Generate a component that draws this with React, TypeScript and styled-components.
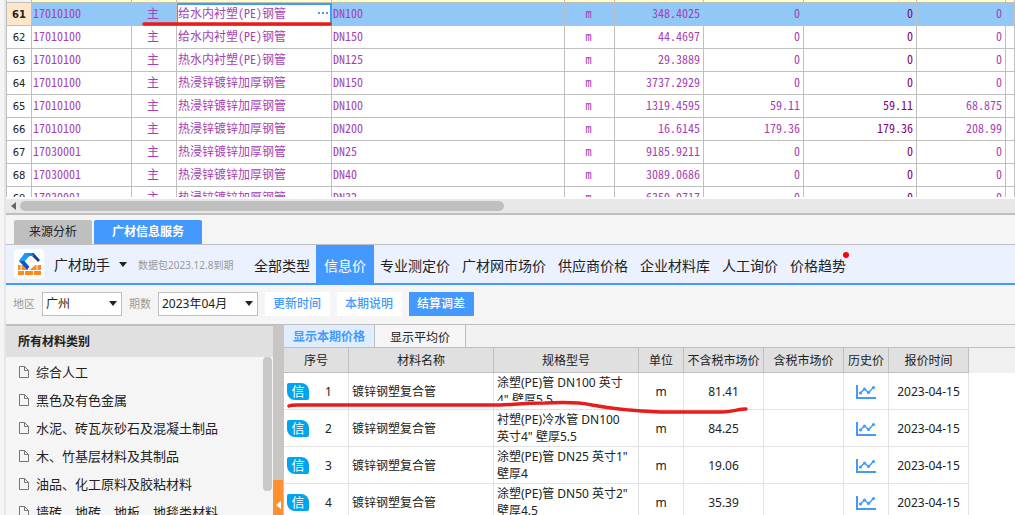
import React from "react";
import styled, { createGlobalStyle, css } from "styled-components";

const GlobalStyle = createGlobalStyle`
  *, *::before, *::after { box-sizing: border-box; }
  body {
    margin: 0;
    background: #f5f5f5;
    color: #222;
    font-family: "Noto Sans", "Noto Sans CJK SC", sans-serif;
    font-size: 12px;
    line-height: 16px;
  }
  button, select { font: inherit; color: inherit; }
  button { border: 0; padding: 0; background: none; cursor: pointer; }
`;

const Shell = styled.div`
  position: relative;
  display: flex;
  flex-direction: column;
  height: 100vh;
  overflow: hidden;
  padding-left: 6px;
  background: linear-gradient(to right, #f5f5f5 4px, #e6e6e6 4px, #e6e6e6 6px, #f5f5f5 6px);
`;

/* ---- bill of materials grid ---- */

const GridPane = styled.div`
  flex: none;
  height: 199px;
  padding-bottom: 2px;
  background: #fff;
`;

const GridClip = styled.div`
  height: 100%;
  overflow: hidden;
`;

const Grid = styled.table`
  width: 100%;
  table-layout: fixed;
  border-collapse: separate;
  border-spacing: 0;
  border-left: 1px solid #bfbfbf;
  font-family: "Noto Sans Mono CJK SC", "Noto Sans CJK SC", monospace;
`;

const Col = styled.col<{ $w?: number }>`
  ${(p) => p.$w && css`width: ${p.$w}px;`}
`;

const HeadEdge = styled.td<{ $plain?: boolean }>`
  height: 3px;
  padding: 0;
  border-right: 1px solid #bfbfbf;
  border-bottom: 1px solid #bfbfbf;
  background: ${(p) => (p.$plain ? "#f2f2f2" : "#ffffc8")};
`;

const Cell = styled.td<{ $align?: string; $dark?: boolean }>`
  height: 23px;
  padding: 0 3px 2px 1px;
  border-right: 1px solid #bfbfbf;
  border-bottom: 1px solid #bfbfbf;
  color: ${(p) => (p.$dark ? "#800080" : "#a63fb5")};
  line-height: 20px;
  text-align: ${(p) => p.$align || "left"};
  white-space: nowrap;
`;

const RowNumber = styled.th<{ $on: boolean }>`
  height: 23px;
  padding: 2px 0 0;
  border-right: 1px solid #bfbfbf;
  border-bottom: 1px solid #bfbfbf;
  background: ${(p) => (p.$on ? "#ffe6c8" : "#fff")};
  color: #222;
  font-family: "DejaVu Sans", sans-serif;
  font-size: 10px;
  font-weight: ${(p) => (p.$on ? 700 : 400)};
  line-height: 20px;
`;

const GridRow = styled.tr<{ $on: boolean }>`
  background: ${(p) => (p.$on ? "#91c8f8" : "#fff")};
`;

const EditCell = styled(Cell)`
  background: #fff;
  box-shadow: inset 0 2px #4499ff, inset 1px 0 #4499ff, inset -1px 0 #4499ff;
  border-right-color: #4499ff;
`;

const EditContent = styled.div`
  display: flex;
  align-items: center;
  justify-content: space-between;
`;

const More = styled.button`
  display: flex;
  gap: 2px;
`;

const MoreDot = styled.span`
  width: 2px;
  height: 2px;
  background: #5b9bd5;
`;

const HScroll = styled.div`
  flex: none;
  display: flex;
  align-items: center;
  gap: 4px;
  height: 16px;
  padding: 0 5px;
  border-bottom: 2px solid #bfbfbf;
  background: #e8e8e8;
`;

const HThumb = styled.div`
  width: 484px;
  height: 10px;
  border-radius: 5px;
  background: #bfbfbf;
`;

/* ---- panel tabs ---- */

const PanelTabs = styled.div`
  flex: none;
  display: flex;
  align-items: flex-end;
  gap: 2px;
  height: 30px;
  padding-left: 8px;
  border-bottom: 1px solid #bfbfbf;
`;

const PanelTab = styled.button<{ $on?: boolean }>`
  height: 24px;
  padding: 0 ${(p) => (p.$on ? 18 : 15)}px;
  border-radius: 2px 2px 0 0;
  background: ${(p) => (p.$on ? "#4499ff" : "#bfbfbf")};
  color: ${(p) => (p.$on ? "#fff" : "#222")};
  font-weight: ${(p) => (p.$on ? 700 : 400)};
`;

const NavBar = styled.nav`
  flex: none;
  display: flex;
  align-items: center;
  height: 40px;
  padding-left: 8px;
  border-bottom: 2px solid #4499ff;
  background: #ebf1ff;
  font-size: 14px;
`;

const Brand = styled.button`
  display: flex;
  align-items: center;
  gap: 9px;
`;

const BrandName = styled.span`
  padding: 2px 0 0 1px;
`;

const Expiry = styled.span`
  width: 121px;
  padding: 2px 0 0 11px;
  color: #999;
  font-size: 10px;
  white-space: nowrap;
`;

const NavItem = styled.button<{ $on?: boolean }>`
  position: relative;
  height: 38px;
  padding: 4px ${(p) => (p.$on ? 8 : 6)}px 0;
  background: ${(p) => (p.$on ? "#4499ff" : "transparent")};
  color: ${(p) => (p.$on ? "#fff" : "#222")};
  white-space: nowrap;
`;

const Dot = styled.span`
  position: absolute;
  top: 7px;
  right: 3px;
  width: 6px;
  height: 6px;
  border-radius: 50%;
  background: #f00;
`;

/* ---- filters ---- */

const Filters = styled.div`
  flex: none;
  display: flex;
  align-items: center;
  gap: 7px;
  height: 40px;
  padding: 0 7px 2px;
  border-bottom: 1px solid #bfbfbf;
`;

const FilterLabel = styled.label`
  color: #999;
  font-size: 11px;
`;

const SelectBox = styled.span<{ $w: number }>`
  position: relative;
  width: ${(p) => p.$w}px;
  height: 24px;
`;

const Select = styled.select`
  appearance: none;
  width: 100%;
  height: 100%;
  padding: 1px 4px 0 3px;
  border: 1px solid #bfbfbf;
  border-radius: 0;
  background: #fff;
`;

const SelectCaret = styled.span`
  position: absolute;
  top: 9px;
  right: 5px;
  display: flex;
  pointer-events: none;
`;

const FilterButton = styled.button<{ $primary?: boolean }>`
  width: 65px;
  height: 24px;
  padding: 1px 1px 0 0;
  background: ${(p) => (p.$primary ? "#4499ff" : "#fff")};
  color: ${(p) => (p.$primary ? "#fff" : "#4499ff")};
  font-weight: 500;
`;

/* ---- lower panes ---- */

const Panes = styled.div`
  flex: 1;
  display: flex;
  min-height: 0;
  overflow: hidden;
`;

const Side = styled.aside`
  flex: none;
  display: flex;
  flex-direction: column;
  width: 267px;
`;

const SideTitle = styled.h2`
  flex: none;
  margin: 0;
  padding-left: 12px;
  border-top: 1px solid #bfbfbf;
  background: #e0e0e0;
  font-size: 12px;
  font-weight: 700;
  line-height: 31px;
`;

const SideBody = styled.div`
  flex: 1;
  display: flex;
  min-height: 0;
  overflow: hidden;
`;

const Tree = styled.ul`
  flex: 1;
  margin: 0;
  padding: 1px 0 0 13px;
  list-style: none;
`;

const TreeItem = styled.button`
  display: flex;
  align-items: center;
  gap: 7px;
  width: 100%;
  height: 28px;
  font-size: 13px;
  white-space: nowrap;
`;

const VTrack = styled.div`
  width: 10px;
  padding-right: 1px;
`;

const VThumb = styled.div`
  height: 134px;
  border-radius: 4px;
  background: #c8c8c8;
`;

const Splitter = styled.div`
  flex: none;
  width: 11px;
  padding-top: 155px;
  background: #c8c5c3;
`;

const SplitHandle = styled.button`
  display: flex;
  align-items: center;
  justify-content: center;
  width: 10px;
  height: 50px;
  background: #ff9030;
`;

const Main = styled.section`
  flex: 1;
  min-width: 0;
  overflow: hidden;
  background: #fff;
`;

const ViewTabs = styled.div`
  display: flex;
  height: 23px;
  border-bottom: 1px solid #bfbfbf;
  background: #f2f2f2;
`;

const ViewTab = styled.button<{ $on?: boolean }>`
  width: 91px;
  padding-top: ${(p) => (p.$on ? 1 : 3)}px;
  border-right: 1px solid #bfbfbf;
  background: ${(p) => (p.$on ? "#e0edff" : "#f5f5f5")};
  color: ${(p) => (p.$on ? "#4499ff" : "#222")};
  font-weight: ${(p) => (p.$on ? 700 : 400)};
`;

const Prices = styled.table`
  width: 100%;
  table-layout: fixed;
  border-collapse: separate;
  border-spacing: 0;
`;

const PriceHead = styled.th`
  height: 25px;
  padding: 2px 0 0;
  border-right: 1px solid #bfbfbf;
  border-bottom: 1px solid #bfbfbf;
  background: #e0e0e0;
  font-weight: 400;
  white-space: nowrap;
`;

const HeadFill = styled.td`
  background: #f0f0f0;
`;

const PriceCell = styled.td<{ $align?: string }>`
  height: 37px;
  padding: 0 3px;
  border-right: 1px solid #e2e2e2;
  border-bottom: 1px solid #e2e2e2;
  text-align: ${(p) => p.$align || "center"};
  line-height: 17px;
  white-space: nowrap;
`;

const IndexBox = styled.div`
  display: flex;
  align-items: center;
  gap: 16px;
`;

const Badge = styled.span`
  width: 22px;
  height: 17px;
  border-radius: 2px 8px 2px 8px;
  background: #00a4ee;
  color: #fff;
  font-size: 13px;
`;

const Spec = styled.div<{ $cut: boolean }>`
  height: ${(p) => (p.$cut ? 27 : 34)}px;
  margin-bottom: ${(p) => (p.$cut ? 7 : 0)}px;
  overflow: hidden;
`;

const IconButton = styled.button`
  display: inline-flex;
  vertical-align: middle;
`;

const Marks = styled.svg`
  position: absolute;
  top: 0;
  left: 0;
  pointer-events: none;
`;

const Caret = () => (
  <svg width="8" height="5" viewBox="0 0 8 5" aria-hidden="true">
    <path d="M0 0h8L4 5z" fill="#222" />
  </svg>
);

const Logo = () => (
  <svg width="30" height="30" viewBox="0 0 30 30" aria-hidden="true">
    <rect width="30" height="30" rx="4" fill="#fff" />
    <path d="M4 16h6l5 4.500 4-4.500h8v10H4z" fill="#ff8a1c" />
    <path d="M4 21.500h23M10.500 21.500v5M19.500 21.500v5M7 16v5.500M14.500 20v1.500M23 16v5.500" stroke="#fff" strokeWidth="1" />
    <path d="M11 4h7l-7.500 8 5 6-2.500 2.500L5 12z" fill="#0757c8" />
    <path d="M11 4h7l-7.500 8H5z" fill="#18a0f8" />
    <path d="M17 4h2.500L26 11l-2 2-6-6z" fill="#16418f" />
    <path d="M12 4h6l2 3h-5z" fill="#1787e8" />
    <path d="M15 20.500l6-5" stroke="#fff" strokeWidth="1.500" />
  </svg>
);

const FileIcon = () => (
  <svg width="10" height="12" viewBox="0 0 10 12" fill="none" stroke="#777" aria-hidden="true">
    <path d="M.5.5h5l4 4v7h-9z" />
    <path d="M5.500.5v4h4" />
  </svg>
);

const ChartIcon = () => (
  <svg width="20" height="15" viewBox="0 0 20 15" fill="none" stroke="#4499ff" aria-hidden="true">
    <path d="M1 0v13h19" strokeWidth="2" />
    <path d="M4.500 8L8.500 4 12.500 7.500 17.500 2.500" strokeWidth="1.500" />
    <g fill="#4499ff" stroke="none">
      <circle cx="4.500" cy="8" r="1.600" />
      <circle cx="8.500" cy="4" r="1.600" />
      <circle cx="12.500" cy="7.500" r="1.600" />
      <circle cx="17.500" cy="2.500" r="1.600" />
    </g>
  </svg>
);

const gridCols = [25, 100, 45, 155, 233, 50, 89, 100, 113, 89];

const gridRows = [
  ["61", "17010100", "给水内衬塑(PE)钢管", "DN100", "348.4025", "0", "0", "0"],
  ["62", "17010100", "给水内衬塑(PE)钢管", "DN150", "44.4697", "0", "0", "0"],
  ["63", "17010100", "热水内衬塑(PE)钢管", "DN125", "29.3889", "0", "0", "0"],
  ["64", "17010100", "热浸锌镀锌加厚钢管", "DN150", "3737.2929", "0", "0", "0"],
  ["65", "17010100", "热浸锌镀锌加厚钢管", "DN100", "1319.4595", "59.11", "59.11", "68.875"],
  ["66", "17010100", "热浸锌镀锌加厚钢管", "DN200", "16.6145", "179.36", "179.36", "208.99"],
  ["67", "17030001", "热浸锌镀锌加厚钢管", "DN25", "9185.9211", "0", "0", "0"],
  ["68", "17030001", "热浸锌镀锌加厚钢管", "DN40", "3089.0686", "0", "0", "0"],
  ["69", "17030001", "热浸锌镀锌加厚钢管", "DN32", "6359.9717", "0", "0", "0"],
];

const navItems = ["全部类型", "信息价", "专业测定价", "广材网市场价", "供应商价格", "企业材料库", "人工询价", "价格趋势"];

const categories = [
  "综合人工",
  "黑色及有色金属",
  "水泥、砖瓦灰砂石及混凝土制品",
  "木、竹基层材料及其制品",
  "油品、化工原料及胶粘材料",
  "墙砖、地砖、地板、地毯类材料",
];

const priceCols = [65, 145, 145, 45, 80, 80, 45, 80];
const priceHeads = ["序号", "材料名称", "规格型号", "单位", "不含税市场价", "含税市场价", "历史价", "报价时间"];

const prices = [
  { spec: ["涂塑(PE)管 DN100 英寸", "4\" 壁厚5.5"], price: "81.41" },
  { spec: ["衬塑(PE)冷水管 DN100", "英寸4\" 壁厚5.5"], price: "84.25" },
  { spec: ["涂塑(PE)管 DN25 英寸1\"", "壁厚4"], price: "19.06" },
  { spec: ["涂塑(PE)管 DN50 英寸2\"", "壁厚4.5"], price: "35.39" },
];

export default function App() {
  return (
    <Shell>
      <GlobalStyle />
      <GridPane>
        <GridClip>
          <Grid>
            <colgroup>
              {gridCols.map((w, i) => <Col key={i} $w={w} />)}
              <Col />
            </colgroup>
            <tbody>
              <tr aria-hidden="true">
                {[...gridCols, 0].map((_, i) => <HeadEdge key={i} $plain={i === 0} />)}
              </tr>
              {gridRows.map(([no, code, name, spec, qty, a, b, c], i) => (
                <GridRow key={no} $on={i === 0}>
                  <RowNumber scope="row" $on={i === 0}>{no}</RowNumber>
                  <Cell>{code}</Cell>
                  <Cell $align="center">主</Cell>
                  {i === 0 ? (
                    <EditCell>
                      <EditContent>
                        {name}
                        <More aria-label="更多"><MoreDot /><MoreDot /><MoreDot /></More>
                      </EditContent>
                    </EditCell>
                  ) : (
                    <Cell>{name}</Cell>
                  )}
                  <Cell>{spec}</Cell>
                  <Cell $align="center">m</Cell>
                  <Cell $align="right">{qty}</Cell>
                  <Cell $align="right">{a}</Cell>
                  <Cell $align="right" $dark>{b}</Cell>
                  <Cell $align="right">{c}</Cell>
                  <Cell />
                </GridRow>
              ))}
            </tbody>
          </Grid>
        </GridClip>
      </GridPane>
      <HScroll>
        <svg width="5" height="8" viewBox="0 0 5 8" aria-hidden="true"><path d="M5 0v8L0 4z" fill="#666" /></svg>
        <HThumb />
      </HScroll>

      <PanelTabs>
        <PanelTab>来源分析</PanelTab>
        <PanelTab $on>广材信息服务</PanelTab>
      </PanelTabs>

      <NavBar>
        <Brand><Logo /><BrandName>广材助手</BrandName><Caret /></Brand>
        <Expiry>数据包2023.12.8到期</Expiry>
        {navItems.map((label, i) => (
          <NavItem key={label} $on={i === 1}>
            {label}
            {i === navItems.length - 1 && <Dot />}
          </NavItem>
        ))}
      </NavBar>

      <Filters>
        <FilterLabel htmlFor="region">地区</FilterLabel>
        <SelectBox $w={80}>
          <Select id="region"><option>广州</option></Select>
          <SelectCaret><Caret /></SelectCaret>
        </SelectBox>
        <FilterLabel htmlFor="period">期数</FilterLabel>
        <SelectBox $w={100}>
          <Select id="period"><option>2023年04月</option></Select>
          <SelectCaret><Caret /></SelectCaret>
        </SelectBox>
        <FilterButton>更新时间</FilterButton>
        <FilterButton>本期说明</FilterButton>
        <FilterButton $primary>结算调差</FilterButton>
      </Filters>

      <Panes>
        <Side>
          <SideTitle>所有材料类别</SideTitle>
          <SideBody>
            <Tree>
              {categories.map((c) => (
                <li key={c}><TreeItem><FileIcon />{c}</TreeItem></li>
              ))}
            </Tree>
            <VTrack><VThumb /></VTrack>
          </SideBody>
        </Side>
        <Splitter>
          <SplitHandle aria-label="收起">
            <svg width="5" height="8" viewBox="0 0 5 8" aria-hidden="true"><path d="M5 0v8L0 4z" fill="#fff" /></svg>
          </SplitHandle>
        </Splitter>
        <Main>
          <ViewTabs>
            <ViewTab $on>显示本期价格</ViewTab>
            <ViewTab>显示平均价</ViewTab>
          </ViewTabs>
          <Prices>
            <colgroup>
              {priceCols.map((w, i) => <Col key={i} $w={w} />)}
              <Col />
            </colgroup>
            <thead>
              <tr>
                {priceHeads.map((h) => <PriceHead key={h} scope="col">{h}</PriceHead>)}
                <HeadFill />
              </tr>
            </thead>
            <tbody>
              {prices.map((p, i) => (
                <tr key={p.price}>
                  <PriceCell>
                    <IndexBox><Badge>信</Badge>{i + 1}</IndexBox>
                  </PriceCell>
                  <PriceCell $align="left">镀锌钢塑复合管</PriceCell>
                  <PriceCell $align="left">
                    <Spec $cut={i === 0}>{p.spec[0]}<br />{p.spec[1]}</Spec>
                  </PriceCell>
                  <PriceCell>m</PriceCell>
                  <PriceCell>{p.price}</PriceCell>
                  <PriceCell />
                  <PriceCell><IconButton aria-label="历史价"><ChartIcon /></IconButton></PriceCell>
                  <PriceCell>2023-04-15</PriceCell>
                  <td />
                </tr>
              ))}
            </tbody>
          </Prices>
        </Main>
      </Panes>

      <Marks width="1015" height="515" viewBox="0 0 1015 515" fill="none" stroke="#e81c1c" strokeLinecap="round" strokeLinejoin="round" aria-hidden="true">
        <path d="M144 24H330" strokeWidth="3.500" />
        <path d="M289 406C291 405 294 405 298 405H500C512 405 520 403 545 403C566 402 578 402 592 405C608 408 630 411 660 412H722C732 412 738 409 746 409" strokeWidth="3.500" />
      </Marks>
    </Shell>
  );
}
